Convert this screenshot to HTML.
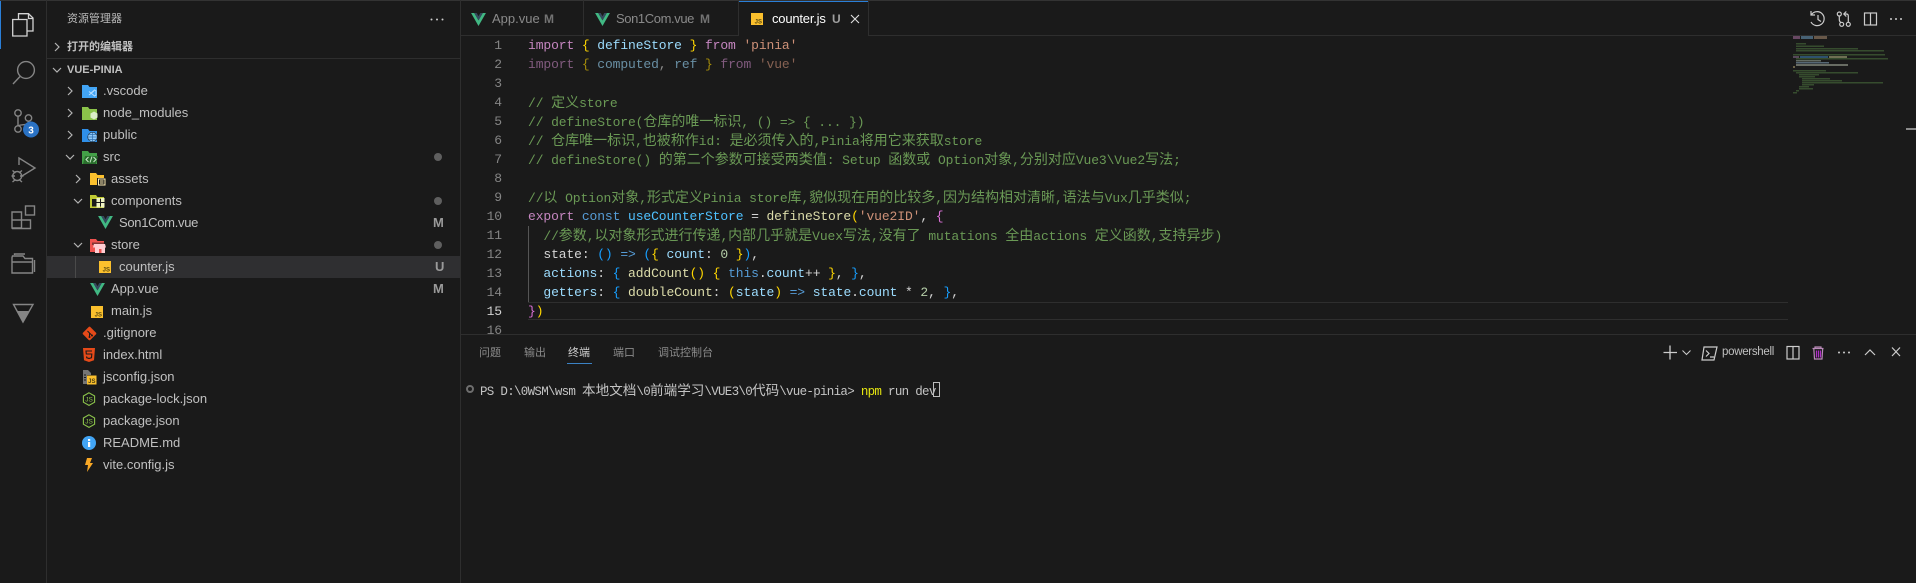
<!DOCTYPE html>
<html><head><meta charset="utf-8">
<style>
*{box-sizing:border-box}
html,body{margin:0;padding:0;width:1916px;height:583px;overflow:hidden;background:#1a1a1a}
body{position:relative;font-family:"Liberation Sans","Noto Sans CJK SC",sans-serif;color:#ccc}
.a{position:absolute}
.ln{position:absolute;height:1px;background:#2e2e2e}
.v{position:absolute;width:1px;background:#2e2e2e}
svg{position:absolute;overflow:visible}
.t{position:absolute;font-size:13px;line-height:22px;height:22px;white-space:nowrap;color:#c0c0c0}
.h{position:absolute;font-size:11px;line-height:16px;white-space:nowrap}
.st{position:absolute;font-size:13px;font-weight:bold;line-height:22px;color:#9a9a9a}
.dot{position:absolute;left:434px;width:8px;height:8px;border-radius:50%;background:#5f5f5f}
.n{position:absolute;left:470px;width:32px;text-align:right;font:13px/19px "Liberation Mono",monospace;letter-spacing:-.11px;color:#858585}
.c{position:absolute;left:528px;white-space:pre;font:13px/19px "Liberation Mono","Noto Sans CJK SC",monospace;letter-spacing:-.11px;color:#d4d4d4}
.c i{font-style:normal;font-family:"Noto Sans CJK SC",sans-serif;font-size:14px;letter-spacing:0;line-height:19px}
.g{color:#6a9955}.k{color:#c586c0}.b{color:#569cd6}.l{color:#9cdcfe}.s{color:#ce9178}.f{color:#dcdcaa}.y{color:#ffd700}.p{color:#da70d6}.u{color:#179fff}.m{color:#b5cea8}.w{color:#4fc1ff}
.tab{position:absolute;top:10px;font-size:13px;line-height:18px;white-space:nowrap}
.pt{position:absolute;top:345px;font-size:11px;line-height:16px;color:#8b8b8b;white-space:nowrap}
.term{position:absolute;left:480px;top:380px;white-space:pre;font:12.5px/18px "Liberation Mono",monospace;letter-spacing:-.7px;color:#c4c4c4}
.term i{font-style:normal;font-family:"Noto Sans CJK SC",sans-serif;font-size:13.6px;letter-spacing:0}
.ic{fill:none;stroke:#858585;stroke-width:1.4}
.tb{fill:none;stroke:#cccccc;stroke-width:1.2}
</style></head><body>

<svg width="0" height="0" style="position:absolute">
<defs>
<symbol id="vue" viewBox="0 0 16 14"><path d="M0 0h3.4L8 8 12.6 0H16L8 14z" fill="#41b883"/><path d="M3.4 0h2.6L8 3.5 10 0h2.6L8 8z" fill="#35495e"/></symbol>
<symbol id="js" viewBox="0 0 12 12"><rect width="12" height="12" fill="#fbc02d"/><text x="11" y="10.5" font-family="Liberation Sans" font-size="6" font-weight="bold" text-anchor="end" fill="#5a4a10">JS</text></symbol>
<symbol id="node" viewBox="0 0 14 14"><path d="M7 .8 12.6 4v6.2L7 13.4 1.4 10.2V4z" fill="none" stroke="#8bc34a" stroke-width="1.1"/><text x="7" y="9.6" font-family="Liberation Sans" font-size="6.5" text-anchor="middle" fill="#8bc34a">JS</text></symbol>
<symbol id="chr" viewBox="0 0 10 10"><path d="M3 1l4 4-4 4" fill="none" stroke="#b4b4b4" stroke-width="1.2"/></symbol>
<symbol id="chd" viewBox="0 0 10 10"><path d="M1 3l4 4 4-4" fill="none" stroke="#b4b4b4" stroke-width="1.2"/></symbol>
</defs>
</svg>

<!-- structure lines -->
<div class="ln" style="left:0;top:0;width:1916px;background:#333"></div>
<div class="v" style="left:46px;top:0;height:583px"></div>
<div class="v" style="left:460px;top:0;height:583px"></div>
<div class="a" style="left:0;top:1px;width:1px;height:48px;background:#2a7fd8"></div>

<!-- activity bar -->
<svg style="left:0;top:0" width="46" height="340" viewBox="0 0 46 340">
<g fill="none" stroke="#d4d4d4" stroke-width="1.3">
<path d="M18.5 19V13.7H28.5L33 18V31H27.5"/><path d="M12.7 19.5H27V36H12.7Z"/><path d="M28.5 14v4.5H33"/>
</g>
<g class="ic">
<circle cx="26" cy="70" r="8.4"/><path d="M20 76.5 13 84"/>
<circle cx="18" cy="113" r="3.2"/><circle cx="18" cy="129" r="3.2"/><circle cx="28.500" cy="118" r="3.2"/><path d="M18 116.500V125.500M28.500 121.500C28.500 126 20 124 18.500 126"/>
<path d="M19 165V158L35 168 22 176"/><path d="M12.500 170.500l3 2.500M22 170.500l-3 2.500M11.500 176h3.500M20 176h3.500M12.500 182l3-2.500M22 182l-3-2.500"/><circle cx="17.200" cy="176" r="4.500"/>
<path d="M12 212H21.500V228H12ZM21.500 220H30.500V228.500H12M12 220H21.500"/><rect x="25.500" y="206" width="9" height="9"/>
<path d="M12 257.500 12.500 256H23l2 2.500H32.500V273H12Z M12 262H32.500M14.500 255V254H25M34.500 260V272"/>
</g>
<path d="M13.500 304.500H33L23 322Z" fill="none" stroke="#858585" stroke-width="1.4"/>
<path d="M17.200 311H29.200L23 322Z" fill="#858585"/>
<circle cx="31" cy="129.500" r="8" fill="#2a72c4"/>
<text x="31" y="133.500" font-family="Liberation Sans" font-size="10" font-weight="bold" text-anchor="middle" fill="#fff">3</text>
</svg>

<!-- sidebar header -->
<div class="h" style="left:67px;top:11px;color:#bbb">资源管理器</div>
<svg style="left:430px;top:18px" width="14" height="3"><circle cx="1.500" cy="1.500" r="1" fill="#ccc"/><circle cx="7" cy="1.500" r="1" fill="#ccc"/><circle cx="12.500" cy="1.500" r="1" fill="#ccc"/></svg>
<svg style="left:52px;top:42px" width="10" height="10"><use href="#chr"/></svg>
<div class="h" style="left:67px;top:39px;font-weight:bold;color:#c0c0c0">打开的编辑器</div>
<div class="ln" style="left:47px;top:58px;width:413px"></div>
<svg style="left:52px;top:65px" width="10" height="10"><use href="#chd"/></svg>
<div class="h" style="left:67px;top:62px;font-weight:bold;color:#c0c0c0">VUE-PINIA</div>

<!-- selected row -->
<div class="a" style="left:47px;top:256px;width:413px;height:22px;background:#2f2f31"></div>
<div class="v" style="left:75px;top:256px;height:22px;background:#4a4a4a"></div>

<!-- chevrons -->
<svg style="left:65px;top:86px" width="10" height="10"><use href="#chr"/></svg>
<svg style="left:65px;top:108px" width="10" height="10"><use href="#chr"/></svg>
<svg style="left:65px;top:130px" width="10" height="10"><use href="#chr"/></svg>
<svg style="left:65px;top:152px" width="10" height="10"><use href="#chd"/></svg>
<svg style="left:73px;top:174px" width="10" height="10"><use href="#chr"/></svg>
<svg style="left:73px;top:196px" width="10" height="10"><use href="#chd"/></svg>
<svg style="left:73px;top:240px" width="10" height="10"><use href="#chd"/></svg>

<!-- folder icons -->
<svg style="left:82px;top:85px" width="16" height="13" viewBox="0 0 16 13"><path d="M0 0h6l1.500 2H15v11H0z" fill="#42a5f5"/><path d="M12.500 5l-3.500 3 3.500 3 1.500-.8V5.800zM7 6.500l5 4M7 10l5-4" stroke="#b5dcff" stroke-width="1" fill="none"/></svg>
<svg style="left:82px;top:107px" width="16" height="13" viewBox="0 0 16 13"><path d="M0 0h6l1.500 2H15v11H0z" fill="#8bc34a"/><path d="M12 4.500l3.500 2v4l-3.500 2-3.500-2v-4z" fill="#dcedc8"/></svg>
<svg style="left:82px;top:129px" width="16" height="13" viewBox="0 0 16 13"><path d="M0 0h6l1.500 2H15v11H0z" fill="#2f8fe8"/><circle cx="10.500" cy="8" r="5" fill="#1a1a1a"/><circle cx="10.500" cy="8" r="4.500" fill="#90caf9"/><path d="M6 8h9M10.500 3.500v9M7 5.500h7M7 10.500h7" stroke="#2f6fb0" stroke-width=".7"/></svg>
<svg style="left:82px;top:151px" width="16" height="13" viewBox="0 0 16 13"><path d="M0 0h6l1.500 2H15v11H0z" fill="#43a047"/><path d="M3 5h13l-2 8H1z" fill="#2a6f2d"/><path d="M6.500 6 4 8.500 6.500 11M11.500 6 14 8.500 11.500 11M10 5.500 8 11.500" stroke="#c8e6c9" stroke-width="1" fill="none"/></svg>
<svg style="left:90px;top:173px" width="16" height="14" viewBox="0 0 16 14"><path d="M0 0h6l1.500 2H14v10H0z" fill="#fbc02d"/><rect x="7" y="5" width="8.500" height="9" fill="#1a1a1a"/><path d="M8.500 6h6.500v6H8.500zM10 8h3.500M10 10h3.500" fill="none" stroke="#ffecb3" stroke-width="1"/></svg>
<svg style="left:90px;top:195px" width="16" height="13" viewBox="0 0 16 13"><path d="M0 0h6l1.500 2H14v11H0z" fill="#c0ca33"/><rect x="2" y="4" width="12" height="7.500" fill="#1a1a1a"/><path d="M6.500 3h3.500v4H6.500zM11 3h3.500v4H11zM6.500 8h3.500v4.500H6.500zM11 8h3.500v4.500H11z" fill="#f0f4c3"/></svg>
<svg style="left:90px;top:239px" width="16" height="14" viewBox="0 0 16 14"><path d="M0 0h6l1.500 2H14v11H0z" fill="#ef5350"/><path d="M2 3.500h12V6H2z" fill="#1a1a1a" opacity=".5"/><path d="M4 5h11l1 3.500H3z" fill="#ffcdd2"/><path d="M5 8.500h10V14H5z" fill="#ffcdd2"/><path d="M9 10h2.500v4H9z" fill="#ef5350"/></svg>

<!-- file icons -->
<svg style="left:98px;top:216px" width="15" height="13"><use href="#vue" width="15" height="13"/></svg>
<svg style="left:99px;top:261px" width="12" height="12"><use href="#js" width="12" height="12"/></svg>
<svg style="left:90px;top:283px" width="15" height="13"><use href="#vue" width="15" height="13"/></svg>
<svg style="left:91px;top:306px" width="12" height="12"><use href="#js" width="12" height="12"/></svg>
<svg style="left:82px;top:326px" width="15" height="15" viewBox="0 0 15 15"><rect x="2.300" y="2.300" width="10.400" height="10.400" rx="1.500" fill="#e64a19" transform="rotate(45 7.500 7.500)"/><path d="M5.500 5l4.500 4.500M7.500 7v4" stroke="#1a1a1a" stroke-width="1"/><circle cx="7.500" cy="11" r="1" fill="#1a1a1a"/><circle cx="10" cy="9.500" r="1" fill="#1a1a1a"/></svg>
<svg style="left:83px;top:348px" width="12" height="14" viewBox="0 0 12 14"><path d="M0 0h12l-1 12.200L6 14l-5-1.800z" fill="#e64a19"/><path d="M9 3H3l.3 3h5.500l-.3 3.700L6 10.500l-2.300-.8-.1-1.300" fill="none" stroke="#1a1a1a" stroke-width="1.100"/></svg>
<svg style="left:83px;top:370px" width="14" height="15" viewBox="0 0 14 15"><path d="M0 0h5l3 3v2H4v9H0z" fill="#757575"/><path d="M1 5h2M1 7.500h2M1 10h2" stroke="#1a1a1a" stroke-width="1"/><rect x="4" y="5.500" width="9.500" height="9" fill="#fbc02d"/><text x="8.800" y="12.800" font-family="Liberation Sans" font-size="6" font-weight="bold" text-anchor="middle" fill="#4a3c10">JS</text></svg>
<svg style="left:82px;top:392px" width="14" height="14"><use href="#node" width="14" height="14"/></svg>
<svg style="left:82px;top:414px" width="14" height="14"><use href="#node" width="14" height="14"/></svg>
<svg style="left:82px;top:436px" width="14" height="14" viewBox="0 0 14 14"><circle cx="7" cy="7" r="7" fill="#42a5f5"/><rect x="6" y="6" width="2.200" height="5" fill="#fff"/><rect x="6" y="3" width="2.200" height="2" fill="#fff"/></svg>
<svg style="left:85px;top:458px" width="8" height="14" viewBox="0 0 8 14"><path d="M2 0h5L5 5h3L2 14l1-7H0z" fill="#f9a825"/></svg>

<!-- file names -->
<div class="t" style="left:103px;top:80px">.vscode</div>
<div class="t" style="left:103px;top:102px">node_modules</div>
<div class="t" style="left:103px;top:124px">public</div>
<div class="t" style="left:103px;top:146px">src</div>
<div class="t" style="left:111px;top:168px">assets</div>
<div class="t" style="left:111px;top:190px">components</div>
<div class="t" style="left:119px;top:212px;letter-spacing:-.3px">Son1Com.vue</div>
<div class="t" style="left:111px;top:234px">store</div>
<div class="t" style="left:119px;top:256px">counter.js</div>
<div class="t" style="left:111px;top:278px">App.vue</div>
<div class="t" style="left:111px;top:300px">main.js</div>
<div class="t" style="left:103px;top:322px">.gitignore</div>
<div class="t" style="left:103px;top:344px">index.html</div>
<div class="t" style="left:103px;top:366px">jsconfig.json</div>
<div class="t" style="left:103px;top:388px">package-lock.json</div>
<div class="t" style="left:103px;top:410px">package.json</div>
<div class="t" style="left:103px;top:432px">README.md</div>
<div class="t" style="left:103px;top:454px">vite.config.js</div>

<!-- status -->
<div class="dot" style="top:153px"></div>
<div class="dot" style="top:197px"></div>
<div class="dot" style="top:241px"></div>
<div class="st" style="left:433px;top:212px">M</div>
<div class="st" style="left:435px;top:256px">U</div>
<div class="st" style="left:433px;top:278px">M</div>

<!-- tabs -->
<div class="ln" style="left:461px;top:35px;width:1455px"></div>
<div class="v" style="left:583px;top:0;height:35px"></div>
<div class="v" style="left:738px;top:0;height:36px"></div>
<div class="v" style="left:868px;top:0;height:36px"></div>
<div class="a" style="left:739px;top:35px;width:129px;height:1px;background:#1a1a1a"></div>
<div class="a" style="left:739px;top:1px;width:129px;height:1px;background:#2a7fd8"></div>
<svg style="left:471px;top:13px" width="15" height="13"><use href="#vue" width="15" height="13"/></svg>
<div class="tab" style="left:492px;color:#8a8a8a">App.vue</div>
<div class="tab" style="left:544px;color:#737373;font-weight:bold;font-size:12px">M</div>
<svg style="left:595px;top:13px" width="15" height="13"><use href="#vue" width="15" height="13"/></svg>
<div class="tab" style="left:616px;color:#8a8a8a;letter-spacing:-.4px">Son1Com.vue</div>
<div class="tab" style="left:700px;color:#737373;font-weight:bold;font-size:12px">M</div>
<svg style="left:751px;top:13px" width="12" height="12"><use href="#js" width="12" height="12"/></svg>
<div class="tab" style="left:772px;color:#fff;letter-spacing:-.2px">counter.js</div>
<div class="tab" style="left:832px;color:#a0a0a0;font-weight:bold;font-size:12px">U</div>
<svg style="left:850px;top:14px" width="10" height="10"><path d="M1 1l8 8M9 1l-8 8" stroke="#e0e0e0" stroke-width="1.100"/></svg>

<!-- top right icons -->
<svg style="left:1805px;top:8px" width="105" height="22" viewBox="0 0 105 22">
<g class="tb">
<path d="M6.500 6.500A7 7 0 1 1 6 14M6 3v4h4M13 7v4.500l3 2"/>
<circle cx="34.300" cy="6" r="2"/><circle cx="36.700" cy="16.300" r="2"/><circle cx="43.300" cy="16.300" r="2"/><path d="M34.300 8v3.500c0 2 .8 2.500 1.500 3M39 6h2.300c1.500 0 2 1 2 2v6.300M41.300 3.500 38.800 6l2.500 2.500"/>
<rect x="59.500" y="5" width="12" height="12"/><path d="M65.500 5v12"/>
</g>
<circle cx="86" cy="11" r="1" fill="#ccc"/><circle cx="91" cy="11" r="1" fill="#ccc"/><circle cx="96" cy="11" r="1" fill="#ccc"/>
</svg>

<!-- minimap -->
<svg style="left:1793px;top:36px" width="100" height="62" viewBox="0 0 100 62">
<g opacity=".55">
<rect x="0" y="0" width="7" height="3" fill="#a86fa0"/><rect x="8" y="0" width="12" height="3" fill="#6d9ec0"/><rect x="21" y="0" width="13" height="3" fill="#a88c70"/>
<g fill="#4e7540">
<rect x="3" y="7" width="10" height="1.500"/><rect x="3" y="9.500" width="28" height="1.500"/><rect x="3" y="12" width="62" height="1.500"/><rect x="3" y="14" width="88" height="1.500"/>
<rect x="0" y="18" width="92" height="1.500"/>
</g>
<rect x="0" y="20" width="6" height="2" fill="#8a6f90"/><rect x="7" y="20" width="28" height="2" fill="#3f7fb5"/><rect x="36" y="20" width="18" height="2" fill="#b5b585"/>
<rect x="3" y="22" width="92" height="1.500" fill="#4e7540"/><rect x="3" y="24" width="25" height="1.500" fill="#a0b0a0"/><rect x="3" y="26" width="33" height="1.500" fill="#8aa9c0"/><rect x="3" y="28" width="52" height="2" fill="#a9b0a0"/><rect x="0" y="30" width="2" height="2" fill="#b0a070"/>
<g fill="#4e7540">
<rect x="0" y="34" width="33" height="1.500"/><rect x="3" y="36" width="62" height="1.500"/><rect x="6" y="38" width="20" height="1.500"/><rect x="6" y="40" width="16" height="1.500"/><rect x="9" y="42" width="28" height="1.500"/><rect x="9" y="44" width="40" height="1.500"/><rect x="9" y="46" width="81" height="1.500"/><rect x="9" y="48" width="12" height="1.500"/><rect x="6" y="50" width="10" height="1.500"/><rect x="6" y="52" width="14" height="1.500"/><rect x="3" y="54" width="3" height="1.500"/><rect x="0" y="56" width="4" height="1.500"/>
</g>
</g>
</svg>
<div class="a" style="left:1906px;top:128px;width:10px;height:2px;background:#8a8a8a"></div>

<!-- code -->
<div class="a" style="left:461px;top:36px;width:1455px;height:298px;overflow:hidden">
<div class="a" style="left:-461px;top:-36px;width:1916px;height:400px">
<div class="v" style="left:528px;top:226px;height:76px;background:#555"></div>
<div class="a" style="left:528px;top:302px;width:1260px;height:18px;border-top:1px solid #2e2e2e;border-bottom:1px solid #2e2e2e"></div>
<div class="n" style="top:36px">1</div><div class="n" style="top:55px">2</div><div class="n" style="top:74px">3</div><div class="n" style="top:93px">4</div><div class="n" style="top:112px">5</div><div class="n" style="top:131px">6</div><div class="n" style="top:150px">7</div><div class="n" style="top:169px">8</div><div class="n" style="top:188px">9</div><div class="n" style="top:207px">10</div><div class="n" style="top:226px">11</div><div class="n" style="top:245px">12</div><div class="n" style="top:264px">13</div><div class="n" style="top:283px">14</div><div class="n" style="top:302px;color:#d0d0d0">15</div><div class="n" style="top:321px">16</div>

<div class="c" style="top:36px"><span class="k">import</span> <span class="y">{</span> <span class="l">defineStore</span> <span class="y">}</span> <span class="k">from</span> <span class="s">'pinia'</span></div>
<div class="c" style="top:55px;opacity:.6"><span class="k">import</span> <span class="y">{</span> <span class="l">computed</span>, <span class="l">ref</span> <span class="y">}</span> <span class="k">from</span> <span class="s">'vue'</span></div>
<div class="c g" style="top:93px">// <i>定义</i>store</div>
<div class="c g" style="top:112px">// defineStore(<i>仓库的唯一标识</i>, () =&gt; { ... })</div>
<div class="c g" style="top:131px">// <i>仓库唯一标识</i>,<i>也被称作</i>id: <i>是必须传入的</i>,Pinia<i>将用它来获取</i>store</div>
<div class="c g" style="top:150px">// defineStore() <i>的第二个参数可接受两类值</i>: Setup <i>函数或</i> Option<i>对象</i>,<i>分别对应</i>Vue3\Vue2<i>写法</i>;</div>
<div class="c g" style="top:188px">//<i>以</i> Option<i>对象</i>,<i>形式定义</i>Pinia store<i>库</i>,<i>貌似现在用的比较多</i>,<i>因为结构相对清晰</i>,<i>语法与</i>Vux<i>几乎类似</i>;</div>
<div class="c" style="top:207px"><span class="k">export</span> <span class="b">const</span> <span class="w">useCounterStore</span> = <span class="f">defineStore</span><span class="y">(</span><span class="s">'vue2ID'</span>, <span class="p">{</span></div>
<div class="c g" style="top:226px">  //<i>参数</i>,<i>以对象形式进行传递</i>,<i>内部几乎就是</i>Vuex<i>写法</i>,<i>没有了</i> mutations <i>全由</i>actions <i>定义函数</i>,<i>支持异步</i>)</div>
<div class="c" style="top:245px">  state: <span class="u">()</span> <span class="b">=&gt;</span> <span class="u">(</span><span class="y">{</span> <span class="l">count</span>: <span class="m">0</span> <span class="y">}</span><span class="u">)</span>,</div>
<div class="c" style="top:264px">  <span class="l">actions</span>: <span class="u">{</span> <span class="f">addCount</span><span class="y">()</span> <span class="y">{</span> <span class="b">this</span>.<span class="l">count</span>++ <span class="y">}</span>, <span class="u">}</span>,</div>
<div class="c" style="top:283px">  <span class="l">getters</span>: <span class="u">{</span> <span class="f">doubleCount</span>: <span class="y">(</span><span class="l">state</span><span class="y">)</span> <span class="b">=&gt;</span> <span class="l">state</span>.<span class="l">count</span> * <span class="m">2</span>, <span class="u">}</span>,</div>
<div class="c" style="top:302px"><span class="p">}</span><span class="y">)</span></div>
</div>
</div>

<!-- panel -->
<div class="ln" style="left:461px;top:334px;width:1455px"></div>
<div class="pt" style="left:479px">问题</div>
<div class="pt" style="left:524px">输出</div>
<div class="pt" style="left:568px;color:#d0d0d0">终端</div>
<div class="a" style="left:567px;top:363px;width:25px;height:1px;background:#3b82c4"></div>
<div class="pt" style="left:613px">端口</div>
<div class="pt" style="left:658px">调试控制台</div>

<svg style="left:1660px;top:340px" width="250" height="24" viewBox="0 0 250 24">
<g class="tb">
<path d="M3.500 12.500H17M10 5.500V19.500" stroke-width="1.300"/>
<path d="M22.500 10.500l4 4 4-4" stroke-width="1"/>
<path d="M44 7H57L54 20H42Z"/><path d="M46 10.500l3 3-3 3M50 17h4"/>
<rect x="127" y="6.500" width="12" height="12.500"/><path d="M133 6.500V19"/>
<path d="M205 15l5-5 5 5" stroke-width="1.200"/>
<path d="M232 7.500l8 8.500M240 7.500l-8 8.500" stroke-width="1.200"/>
</g>
<g fill="none" stroke="#b98ab8" stroke-width="1.200">
<path d="M152.500 8.500H163.500M155 8.500V7h6v1.500M153.800 8.500 154.500 19h7.500l.7-10.500"/>
<path d="M156.500 10.500V17.500M158.500 10.500V17.500M160.500 10.500V17.500" stroke="#b030c8"/>
</g>
<circle cx="179" cy="12.500" r="1" fill="#ccc"/><circle cx="184" cy="12.500" r="1" fill="#ccc"/><circle cx="189" cy="12.500" r="1" fill="#ccc"/>
</svg>
<div class="a" style="left:1722px;top:344px;font-size:11.5px;line-height:16px;color:#c0c0c0;letter-spacing:-.3px">powershell</div>

<svg style="left:465px;top:384px" width="10" height="10"><circle cx="5" cy="5" r="3" fill="none" stroke="#6e6e6e" stroke-width="2"/></svg>
<div class="term">PS D:\0WSM\wsm <i>本地文档</i>\0<i>前端学习</i>\VUE3\0<i>代码</i>\vue-pinia&gt; <span style="color:#e5e510">npm</span> run dev</div>
<div class="a" style="left:933px;top:382px;width:7px;height:15px;border:1px solid #bdbdbd"></div>

</body></html>
